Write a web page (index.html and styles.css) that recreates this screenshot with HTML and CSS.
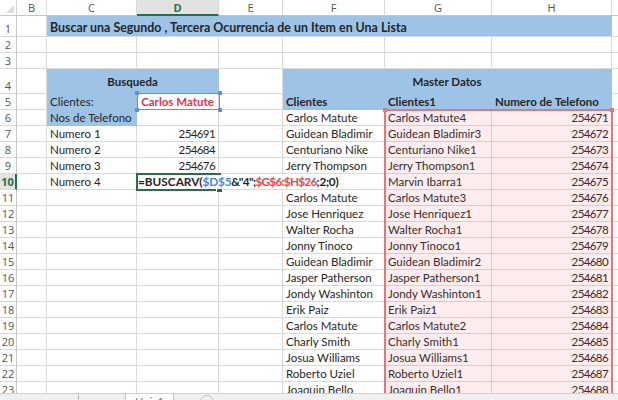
FILE: index.html
```html
<!DOCTYPE html>
<html lang="es">
<head>
<meta charset="utf-8">
<title>Buscar una Segundo , Tercera Ocurrencia</title>
<link rel="stylesheet" href="styles.css">
</head>
<body>
<div class="app">
  <div class="sheet">
    <!-- column headers -->
    <div class="corner"><span class="tri"></span></div>
    <div class="h">B</div><div class="h">C</div><div class="h act">D</div><div class="h">E</div><div class="h">F</div><div class="h">G</div><div class="h">H</div><div class="h last"></div>

    <!-- row 1 -->
    <div class="r">1</div><div class="c"></div>
    <div class="c b bd s6 title">Buscar una Segundo , Tercera Ocurrencia de un Item en Una Lista</div>
    <div class="c"></div>

    <!-- row 2 -->
    <div class="r">2</div><div class="c"></div><div class="c"></div><div class="c"></div><div class="c"></div><div class="c"></div><div class="c"></div><div class="c"></div><div class="c"></div>
    <!-- row 3 -->
    <div class="r">3</div><div class="c"></div><div class="c"></div><div class="c"></div><div class="c"></div><div class="c"></div><div class="c"></div><div class="c"></div><div class="c"></div>

    <!-- row 4 -->
    <div class="r">4</div><div class="c"></div>
    <div class="c b bd ctr mid s2">Busqueda</div>
    <div class="c"></div>
    <div class="c b bd ctr mid s3">Master Datos</div>
    <div class="c"></div>

    <!-- row 5 -->
    <div class="r">5</div><div class="c"></div>
    <div class="c b">Clientes:</div>
    <div class="c bd ctr red">Carlos Matute</div>
    <div class="c"></div>
    <div class="c b bd">Clientes</div>
    <div class="c b bd">Clientes1</div>
    <div class="c b bd">Numero de Telefono</div>
    <div class="c"></div>

    <!-- row 6 -->
    <div class="r">6</div><div class="c"></div>
    <div class="c b">Nos de Telefono</div><div class="c"></div><div class="c"></div>
    <div class="c">Carlos Matute</div><div class="c">Carlos Matute4</div><div class="c n">254671</div><div class="c"></div>

    <!-- row 7 -->
    <div class="r">7</div><div class="c"></div>
    <div class="c">Numero 1</div><div class="c n">254691</div><div class="c"></div>
    <div class="c">Guidean Bladimir</div><div class="c">Guidean Bladimir3</div><div class="c n">254672</div><div class="c"></div>

    <!-- row 8 -->
    <div class="r">8</div><div class="c"></div>
    <div class="c">Numero 2</div><div class="c n">254684</div><div class="c"></div>
    <div class="c">Centuriano Nike</div><div class="c">Centuriano Nike1</div><div class="c n">254673</div><div class="c"></div>

    <!-- row 9 -->
    <div class="r">9</div><div class="c"></div>
    <div class="c">Numero 3</div><div class="c n">254676</div><div class="c"></div>
    <div class="c">Jerry Thompson</div><div class="c">Jerry Thompson1</div><div class="c n">254674</div><div class="c"></div>

    <!-- row 10 -->
    <div class="r act">10</div><div class="c"></div>
    <div class="c">Numero 4</div><div class="c"></div><div class="c"></div>
    <div class="c"></div><div class="c">Marvin Ibarra1</div><div class="c n">254675</div><div class="c"></div>

    <!-- row 11 -->
    <div class="r">11</div><div class="c"></div><div class="c"></div><div class="c"></div><div class="c"></div>
    <div class="c">Carlos Matute</div><div class="c">Carlos Matute3</div><div class="c n">254676</div><div class="c"></div>
    <!-- row 12 -->
    <div class="r">12</div><div class="c"></div><div class="c"></div><div class="c"></div><div class="c"></div>
    <div class="c">Jose Henriquez</div><div class="c">Jose Henriquez1</div><div class="c n">254677</div><div class="c"></div>
    <!-- row 13 -->
    <div class="r">13</div><div class="c"></div><div class="c"></div><div class="c"></div><div class="c"></div>
    <div class="c">Walter Rocha</div><div class="c">Walter Rocha1</div><div class="c n">254678</div><div class="c"></div>
    <!-- row 14 -->
    <div class="r">14</div><div class="c"></div><div class="c"></div><div class="c"></div><div class="c"></div>
    <div class="c">Jonny Tinoco</div><div class="c">Jonny Tinoco1</div><div class="c n">254679</div><div class="c"></div>
    <!-- row 15 -->
    <div class="r">15</div><div class="c"></div><div class="c"></div><div class="c"></div><div class="c"></div>
    <div class="c">Guidean Bladimir</div><div class="c">Guidean Bladimir2</div><div class="c n">254680</div><div class="c"></div>
    <!-- row 16 -->
    <div class="r">16</div><div class="c"></div><div class="c"></div><div class="c"></div><div class="c"></div>
    <div class="c">Jasper Patherson</div><div class="c">Jasper Patherson1</div><div class="c n">254681</div><div class="c"></div>
    <!-- row 17 -->
    <div class="r">17</div><div class="c"></div><div class="c"></div><div class="c"></div><div class="c"></div>
    <div class="c">Jondy Washinton</div><div class="c">Jondy Washinton1</div><div class="c n">254682</div><div class="c"></div>
    <!-- row 18 -->
    <div class="r">18</div><div class="c"></div><div class="c"></div><div class="c"></div><div class="c"></div>
    <div class="c">Erik Paiz</div><div class="c">Erik Paiz1</div><div class="c n">254683</div><div class="c"></div>
    <!-- row 19 -->
    <div class="r">19</div><div class="c"></div><div class="c"></div><div class="c"></div><div class="c"></div>
    <div class="c">Carlos Matute</div><div class="c">Carlos Matute2</div><div class="c n">254684</div><div class="c"></div>
    <!-- row 20 -->
    <div class="r">20</div><div class="c"></div><div class="c"></div><div class="c"></div><div class="c"></div>
    <div class="c">Charly Smith</div><div class="c">Charly Smith1</div><div class="c n">254685</div><div class="c"></div>
    <!-- row 21 -->
    <div class="r">21</div><div class="c"></div><div class="c"></div><div class="c"></div><div class="c"></div>
    <div class="c">Josua Williams</div><div class="c">Josua Williams1</div><div class="c n">254686</div><div class="c"></div>
    <!-- row 22 -->
    <div class="r">22</div><div class="c"></div><div class="c"></div><div class="c"></div><div class="c"></div>
    <div class="c">Roberto Uziel</div><div class="c">Roberto Uziel1</div><div class="c n">254687</div><div class="c"></div>
    <!-- row 23 -->
    <div class="r">23</div><div class="c"></div><div class="c"></div><div class="c"></div><div class="c"></div>
    <div class="c">Joaquin Bello</div><div class="c">Joaquin Bello1</div><div class="c n">254688</div><div class="c"></div>

    <!-- overlays: reference highlights and in-cell editor -->
    <div class="ref-blue"><i class="k tl"></i><i class="k tr"></i><i class="k bl"></i><i class="k br"></i></div>
    <div class="ref-red"><i class="k tl"></i><i class="k tr"></i></div>
    <div class="active"><i class="handle"></i></div>
    <div class="editor">=BUSCARV(<span class="fb">$D$5</span><span class="q">&amp;"4";</span><span class="fr">$G$6:$H$26</span><span class="tail">;2;0)</span></div>
  </div>

  <div class="tabs">
    <div class="tab-nav"><span class="sep"></span></div>
    <div class="tab">Hoja1</div>
    <div class="tab-rest"><span class="plus"></span></div>
  </div>
</div>
</body>
</html>
```

FILE: styles.css
```css
html, body {
  margin: 0;
  padding: 0;
  background: #ffffff;
}

.app {
  width: 618px;
  height: 400px;
  overflow: hidden;
  display: flex;
  flex-direction: column;
  font-family: Lato, "Open Sans", "Liberation Sans", sans-serif;
  color: #262626;
}

.sheet {
  position: relative;
  height: 393px;
  overflow: hidden;
  display: grid;
  grid-template-columns: 17px 30px 90px 82px 64px 102px 107px 120px 1fr;
  grid-template-rows: 16px 21px 16px 16px 25px repeat(19, 16px);
  font-size: 11.5px;
}

.corner {
  position: relative;
  border-right: 1px solid #d4d4d4;
  border-bottom: 1px solid #c6c6c6;
  box-sizing: border-box;
}
.tri {
  position: absolute;
  right: 2px;
  bottom: 2px;
  width: 0;
  height: 0;
  border-left: 8px solid transparent;
  border-bottom: 8px solid #dcdcdc;
}

.h {
  box-sizing: border-box;
  border-right: 1px solid #dadada;
  border-bottom: 1px solid #c6c6c6;
  text-align: center;
  font-size: 11px;
  line-height: 15px;
  color: #555555;
  font-family: "Open Sans", Lato, sans-serif;
}
.h.act {
  background: #e2e2e2;
  color: #217346;
  font-weight: bold;
  border-bottom: 2px solid #217346;
}
.h.last {
  border-right: none;
}

.r {
  box-sizing: border-box;
  border-right: 1px solid #c6c6c6;
  border-bottom: 1px solid #dadada;
  font-size: 11px;
  color: #555555;
  display: flex;
  align-items: flex-end;
  justify-content: center;
  line-height: 15px;
  font-family: "Open Sans", Lato, sans-serif;
}
.r.act {
  background: #e2e2e2;
  color: #217346;
  font-weight: bold;
  border-right: 2px solid #217346;
}

.c {
  box-sizing: border-box;
  border-right: 1px solid #dadada;
  border-bottom: 1px solid #dadada;
  padding: 0 3px;
  white-space: nowrap;
  overflow: visible;
  display: flex;
  align-items: flex-end;
  line-height: 15px;
}

.b {
  background: #9dc3e6;
  border-color: #9dc3e6;
}
.bd { font-weight: bold; }
.ctr { justify-content: center; }
.mid { align-items: center; padding-top: 1px; }
.n {
  justify-content: flex-end;
  letter-spacing: -0.6px;
}
.red { color: #e0354a; }
.s2 { grid-column: span 2; }
.s3 { grid-column: span 3; }
.s6 { grid-column: span 6; }
.title {
  font-size: 12.4px;
  align-items: center;
  padding-top: 3px;
  border-bottom-color: #dadada;
}

/* reference highlight of $D$5 */
.ref-blue {
  position: absolute;
  left: 137px;
  top: 93px;
  width: 83px;
  height: 17px;
  box-sizing: border-box;
  border: 1px solid #5b8ee0;
}
.ref-red {
  position: absolute;
  left: 384px;
  top: 109px;
  width: 229px;
  height: 300px;
  box-sizing: border-box;
  border: 2px solid #e87579;
  border-bottom: none;
  background: rgba(240, 90, 100, 0.11);
}
.k {
  position: absolute;
  width: 4px;
  height: 4px;
}
.ref-blue .k { background: #5b8ee0; }
.ref-red .k { background: #e87579; }
.k.tl { left: -3px; top: -3px; }
.k.tr { right: -3px; top: -3px; }
.k.bl { left: -3px; bottom: -3px; }
.k.br { right: -3px; bottom: -3px; }

/* active cell D10 */
.active {
  position: absolute;
  left: 136px;
  top: 173px;
  width: 85px;
  height: 18px;
  box-sizing: border-box;
  border: 2px solid #217346;
}
.handle {
  position: absolute;
  right: -4px;
  bottom: -4px;
  width: 5px;
  height: 5px;
  background: #217346;
  border: 1px solid #ffffff;
}

.editor {
  position: absolute;
  left: 138px;
  top: 175px;
  height: 14px;
  line-height: 14px;
  padding-right: 2px;
  background: #ffffff;
  font-size: 11.8px;
  font-weight: bold;
  white-space: nowrap;
  color: #262626;
}
.fb { color: #4a86e0; letter-spacing: -0.2px; }
.q { letter-spacing: -0.7px; }
.fr { color: #e0464f; letter-spacing: -0.75px; }
.tail { letter-spacing: -0.3px; }

/* sheet tabs strip */
.tabs {
  flex: 1;
  display: flex;
  background: #f0f0f0;
  border-top: 1px solid #d0d0d0;
  overflow: hidden;
}
.tab-nav {
  width: 125px;
  position: relative;
}
.sep {
  position: absolute;
  left: 78px;
  top: 0;
  width: 1px;
  height: 10px;
  background: #b8b8b8;
}
.tab {
  width: 47px;
  background: #ffffff;
  border-left: 1px solid #c6c6c6;
  border-right: 1px solid #c6c6c6;
  margin-top: -1px;
  font-size: 11px;
  line-height: 14px;
  padding-top: 2px;
  text-align: center;
  color: #777777;
}
.tab-rest {
  flex: 1;
  position: relative;
}
.plus {
  position: absolute;
  left: 26px;
  top: 1px;
  width: 12px;
  height: 12px;
  border: 1px solid #c0c0c0;
  border-radius: 50%;
}
```
